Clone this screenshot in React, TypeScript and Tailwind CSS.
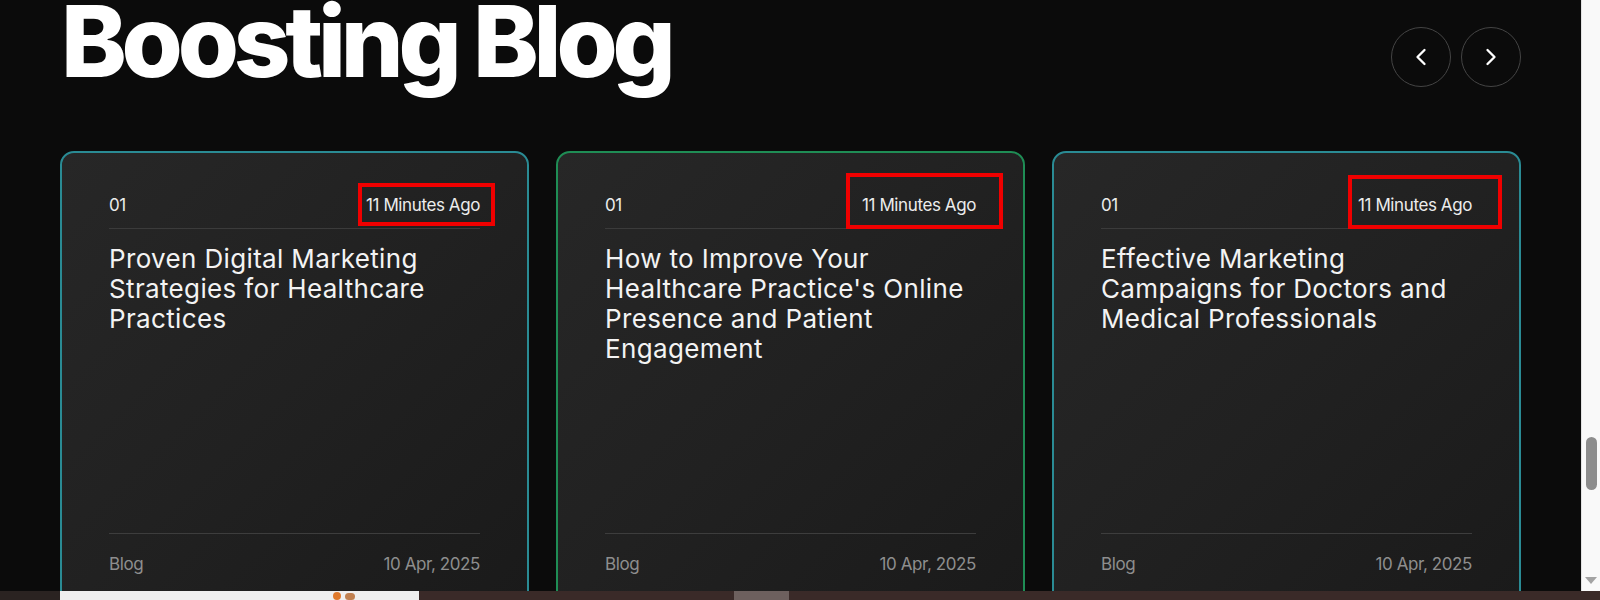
import { ChevronLeft, ChevronRight } from 'lucide-react';

type Post = {
  id: number;
  title: string;
  border: string;
  mark: string;
};

const posts: Post[] = [
  {
    id: 1,
    title: 'Proven Digital Marketing Strategies for Healthcare Practices',
    border: 'border-[#2a8b94]',
    mark: 'left-[296px] top-[30px] w-[137px] h-[43px]',
  },
  {
    id: 2,
    title: "How to Improve Your Healthcare Practice's Online Presence and Patient Engagement",
    border: 'border-[#1f8d55]',
    mark: 'left-[288px] top-[20px] w-[157px] h-[56px]',
  },
  {
    id: 3,
    title: 'Effective Marketing Campaigns for Doctors and Medical Professionals',
    border: 'border-[#2a8b94]',
    mark: 'left-[294px] top-[22px] w-[154px] h-[54px]',
  },
];

function BlogCard({ post }: { post: Post }) {
  return (
    <div
      className={`relative w-[469px] h-[460px] shrink-0 rounded-[14px] border-2 ${post.border} bg-linear-to-br from-[#272727] via-[#212121] to-[#1a1a1a] px-[47px] pt-[40px] pb-[33px] flex flex-col justify-between`}
    >
      <div>
        {/* Meta */}
        <div className="flex items-center justify-between pb-[11px] border-b border-[#3b3b3b] text-[17px] leading-[24px] text-[#ececec] tracking-[-0.4px]">
          <span>01</span>
          <span>11 Minutes Ago</span>
        </div>
        <h3 className="mt-[15px] text-[26px] leading-[30px] text-[#f3f3f3] font-normal tracking-[0.35px]">
          {post.title}
        </h3>
      </div>

      {/* Footer */}
      <div className="border-t border-[#3d3d3d] pt-[18px] flex items-center justify-between text-[17px] leading-[24px] text-[#8e8e8e] tracking-[-0.4px]">
        <span>Blog</span>
        <span>10 Apr, 2025</span>
      </div>

      {/* annotation box */}
      <div className={`absolute ${post.mark} border-4 border-[#f00000]`} />
    </div>
  );
}

export default function App() {
  return (
    <div className="h-[600px] w-[1600px] overflow-hidden bg-[#0b0b0b] flex flex-col font-['Inter',sans-serif]">
      <div className="flex h-[591px]">
        <div className="flex-1 overflow-hidden">
          <div className="w-[1461px] mx-auto">
            {/* Header */}
            <div className="flex items-start justify-between h-[91px]">
              <h2 className="-mt-[9px] ml-[1px] text-[99px] leading-[100px] font-extrabold text-white tracking-[-5.2px]">
                Boosting Blog
              </h2>
              <div className="flex gap-[10px] mt-[27px]">
                <button className="w-[60px] h-[60px] rounded-full border border-[#444] flex items-center justify-center text-white">
                  <ChevronLeft size={28} strokeWidth={2} />
                </button>
                <button className="w-[60px] h-[60px] rounded-full border border-[#444] flex items-center justify-center text-white">
                  <ChevronRight size={28} strokeWidth={2} />
                </button>
              </div>
            </div>

            {/* Cards */}
            <div className="mt-[60px] flex gap-[27px]">
              {posts.map((p) => (
                <BlogCard key={p.id} post={p} />
              ))}
            </div>
          </div>
        </div>

        {/* Scrollbar */}
        <div className="w-[19px] bg-[#f9f9f9] border-l border-[#e2e2e2] flex flex-col items-center">
          <div className="mt-[437px] w-[11px] h-[53px] rounded-full bg-[#8d8d8d]" />
          <div className="mt-[87px] w-0 h-0 border-l-[6px] border-r-[6px] border-t-[7px] border-l-transparent border-r-transparent border-t-[#a3a3a3]" />
        </div>
      </div>

      {/* Taskbar strip */}
      <div className="h-[9px] flex bg-[#3a2a28]">
        <div className="w-[60px] bg-[#2a2321]" />
        <div className="w-[359px] bg-[#efefef] relative">
          <div className="absolute left-[273px] top-[1px] w-[8px] h-[8px] rounded-sm bg-[#e07a2c]" />
          <div className="absolute left-[285px] top-[2px] w-[10px] h-[7px] rounded-full bg-[#c08050]" />
        </div>
        <div className="w-[315px]" />
        <div className="w-[55px] bg-[#6d605e]" />
        <div className="flex-1" />
      </div>
    </div>
  );
}
